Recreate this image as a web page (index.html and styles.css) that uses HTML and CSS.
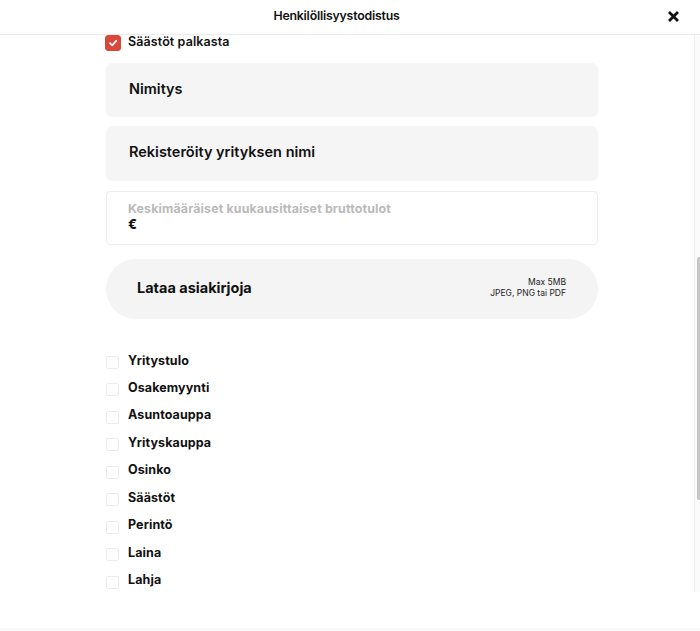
FILE: index.html
```html
<!DOCTYPE html>
<html lang="fi">
<head>
<meta charset="utf-8">
<title>Henkilöllisyystodistus</title>
<link rel="stylesheet" href="styles.css">
</head>
<body>
<div class="modal">
  <header class="modal-header">
    <h1 class="modal-title">Henkilöllisyystodistus</h1>
    <button class="close" aria-label="Sulje">
      <svg width="13" height="13" viewBox="0 0 13 13"><path d="M2 2 L11 11 M11 2 L2 11" stroke="#111" stroke-width="2.8" stroke-linecap="butt"/></svg>
    </button>
  </header>
  <div class="modal-body">
    <div class="scroll">
      <div class="form">
        <label class="check-row checked-row">
          <span class="box checked">
            <svg width="10" height="10" viewBox="0 0 10 10"><path d="M2 5.2 L4.2 7.3 L8.2 2.8" fill="none" stroke="#fff" stroke-width="1.8" stroke-linecap="round" stroke-linejoin="round"/></svg>
          </span>
          <span class="check-label">Säästöt palkasta</span>
        </label>
        <div class="field-card">Nimitys</div>
        <div class="field-card">Rekisteröity yrityksen nimi</div>
        <div class="input-box">
          <div class="input-label">Keskimääräiset kuukausittaiset bruttotulot</div>
          <div class="input-value">€</div>
        </div>
        <div class="upload">
          <span class="upload-title">Lataa asiakirjoja</span>
          <span class="upload-info">Max 5MB<br>JPEG, PNG tai PDF</span>
        </div>
        <ul class="check-list">
          <li class="check-row"><span class="box"></span><span class="check-label">Yritystulo</span></li>
          <li class="check-row"><span class="box"></span><span class="check-label">Osakemyynti</span></li>
          <li class="check-row"><span class="box"></span><span class="check-label">Asuntoauppa</span></li>
          <li class="check-row"><span class="box"></span><span class="check-label">Yrityskauppa</span></li>
          <li class="check-row"><span class="box"></span><span class="check-label">Osinko</span></li>
          <li class="check-row"><span class="box"></span><span class="check-label">Säästöt</span></li>
          <li class="check-row"><span class="box"></span><span class="check-label">Perintö</span></li>
          <li class="check-row"><span class="box"></span><span class="check-label">Laina</span></li>
          <li class="check-row"><span class="box"></span><span class="check-label">Lahja</span></li>
        </ul>
      </div>
    </div>
    <div class="scrollbar"><div class="thumb"></div></div>
  </div>
  <footer class="modal-footer"></footer>
</div>
</body>
</html>
```
FILE: styles.css
```css
* { box-sizing: border-box; }
html, body { margin: 0; padding: 0; background: #fff; }
body {
  font-family: "Inter", "Liberation Sans", sans-serif;
  color: #111;
  width: 700px;
  height: 631px;
  overflow: hidden;
}
.modal { display: flex; flex-direction: column; height: 631px; }
.modal-header {
  height: 35px;
  border-bottom: 1px solid #ebebeb;
  display: flex;
  align-items: center;
  justify-content: center;
  padding-right: 27px;
  position: relative;
  flex: none;
}
.modal-title {
  margin: 0;
  font-size: 12.3px;
  font-weight: 600;
  letter-spacing: -0.2px;
  margin-top: -3px;
}
.close {
  position: absolute;
  right: 20px;
  top: 10px;
  border: 0;
  background: none;
  padding: 0;
  width: 13px;
  height: 13px;
  display: flex;
}
.modal-body { flex: none; height: 557px; display: flex; }
.scroll { flex: 1; overflow: hidden; }
.form { width: 492px; margin-left: 106px; display: flex; flex-direction: column; }
.check-row { display: flex; align-items: center; gap: 8px; }
.checked-row { height: 16px; margin-left: -1px; }
.box {
  width: 13px; height: 13px;
  border: 1px solid #ececec;
  border-radius: 2px;
  background: #fff;
  flex: none;
  display: flex; align-items: center; justify-content: center;
}
.box.checked {
  width: 16px; height: 16px;
  background: #d8483b;
  border-color: #d8483b;
  border-radius: 3px;
}
.check-label { font-size: 12.5px; font-weight: 700; letter-spacing: 0.1px; margin-bottom: 5px; }
.check-list .check-label { margin-left: 1px; }
.checked-row .check-label { margin-left: -1px; font-weight: 600; margin-bottom: 3px; }
.field-card {
  background: #f5f5f5;
  border-radius: 6px;
  height: 54px;
  display: flex; align-items: center;
  padding: 0 0 4px 23px;
  font-size: 14.5px; font-weight: 600;
  margin-top: 12px;
}
.field-card + .field-card { margin-top: 9px; height: 55px; }
.input-box {
  margin-top: 10px;
  height: 54px;
  border: 1px solid #ececec;
  border-radius: 4px;
  padding: 9px 0 0 21px;
}
.input-label { font-size: 12.4px; font-weight: 700; color: #bababa; line-height: 16px; letter-spacing: 0.15px; }
.input-value { font-size: 13px; font-weight: 800; line-height: 15px; }
.upload {
  margin-top: 14px;
  height: 60px;
  border-radius: 30px;
  background: #f4f4f4;
  display: flex; align-items: center; justify-content: space-between;
  padding: 0 32px 3px 31px;
}
.upload-title { font-size: 14.5px; font-weight: 700; }
.upload-info { font-size: 8.5px; text-align: right; line-height: 11px; color: #222; margin-top: 1px; }
.check-list { list-style: none; margin: 37px 0 0; padding: 0; display: flex; flex-direction: column; gap: 14.45px; }
.check-list .check-row { height: 13px; }
.scrollbar {
  width: 6px;
  flex: none;
  border-left: 1px solid #efefef;
  background: #fbfbfb;
  padding-top: 222px;
  display: flex; justify-content: flex-end;
}
.thumb { width: 3px; height: 243px; background: #c6c6c6; border-radius: 2px 0 0 2px; }
.modal-footer { flex: 1; background: linear-gradient(#fff 36px, #f8f8f8 36px); }
```
